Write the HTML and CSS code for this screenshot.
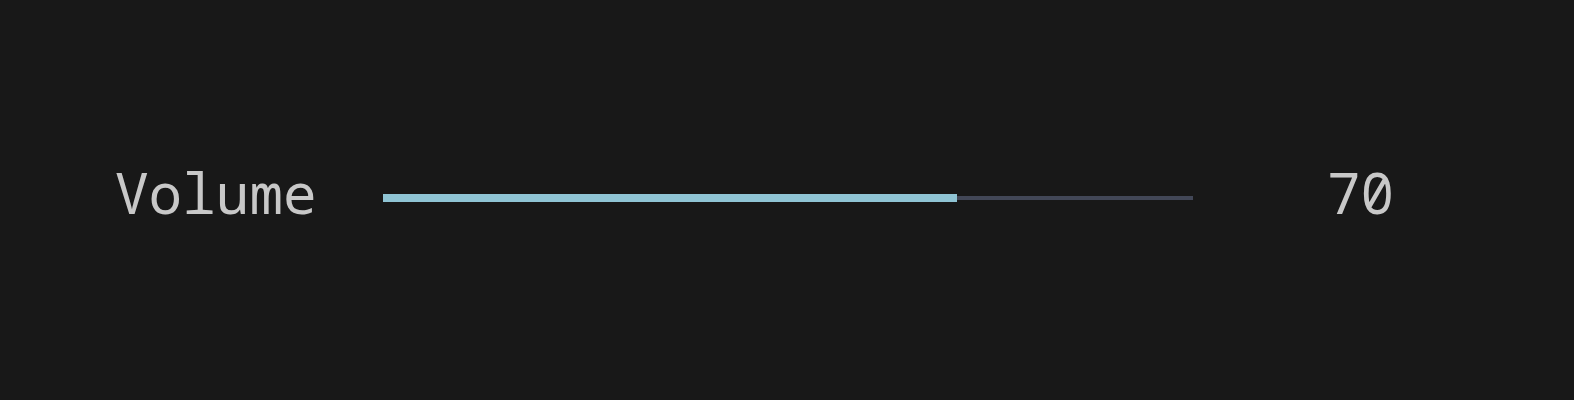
FILE: index.html
```html
<!DOCTYPE html>
<html lang="en">
<head>
<meta charset="utf-8">
<title>Volume</title>
<link rel="stylesheet" href="styles.css">
</head>
<body>
  <div class="control">
    <span class="label">Volume</span>
    <div class="slider">
      <div class="track"></div>
      <div class="fill" style="width: 574px"></div>
    </div>
    <span class="value">70</span>
  </div>
</body>
</html>
```
FILE: styles.css
```css
html, body {
  margin: 0;
  padding: 0;
  background: #181818;
}

body {
  width: 1574px;
  height: 400px;
  overflow: hidden;
  font-family: "Noto Sans Mono", "DejaVu Sans Mono", monospace;
  font-size: 56px;
  color: #c8c8c8;
}

.control {
  display: flex;
  align-items: center;
  padding: 160px 0 0 115px;
  height: 64px;
}

.label {
  flex: none;
  width: 268px;
  line-height: 64px;
}

/* slider: thin track with a thicker filled part on top */
.slider {
  flex: none;
  position: relative;
  width: 810px;
  height: 8px;
  margin-top: 12px;
}

.track {
  position: absolute;
  left: 0;
  right: 0;
  top: 2px;
  height: 4px;
  background: #424757;
}

.fill {
  position: absolute;
  left: 0;
  top: 0;
  height: 8px;
  background: #8fc4d4;
}

.value {
  flex: none;
  margin-left: 134px;
  line-height: 64px;
}
```
